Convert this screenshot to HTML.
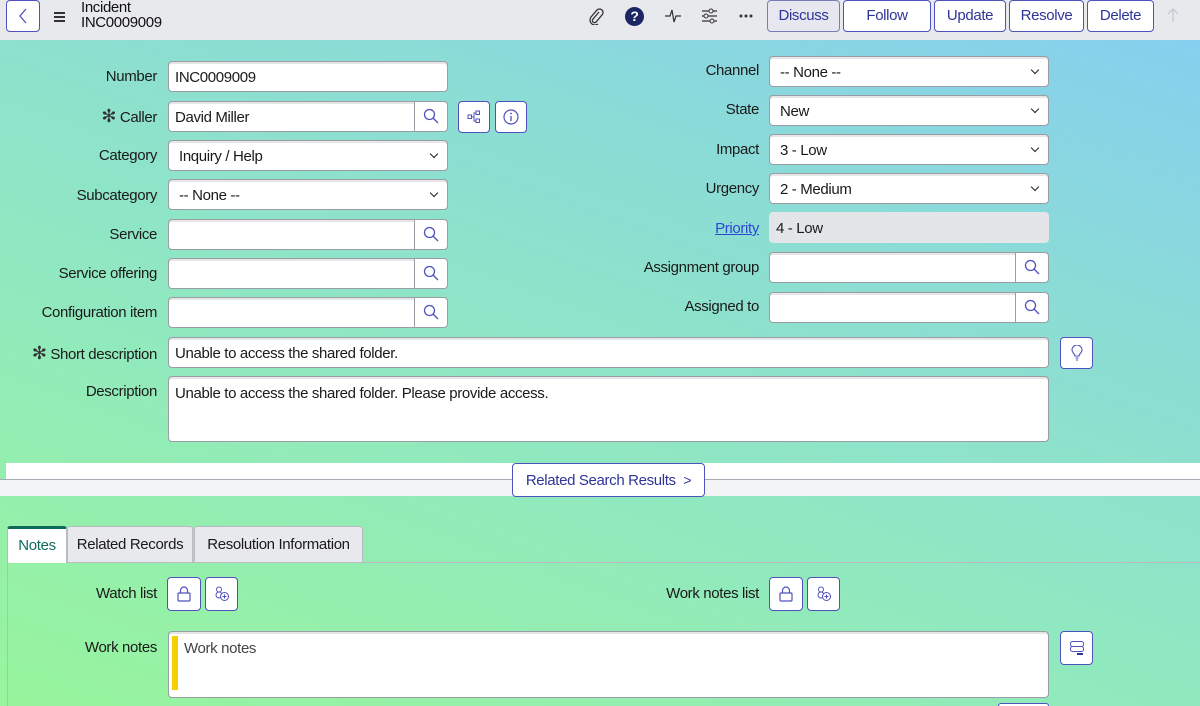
<!DOCTYPE html>
<html><head><meta charset="utf-8">
<style>
*{box-sizing:border-box;margin:0;padding:0}
html{width:1200px;height:706px;overflow:hidden;background:#95f0a4}
body{width:1200px;height:706px;overflow:hidden;position:relative;font-family:"Liberation Sans",sans-serif;font-size:15px;color:#1a1a1a;letter-spacing:-0.35px;
background:linear-gradient(200deg,#86cdf2 0%,#8bdcd6 30%,#90e8c0 60%,#98f59c 100%);}
.a{position:absolute}
.hdr{left:0;top:0;width:1200px;height:40px;background:#e8e9ec}
.lbl{position:absolute;text-align:right;white-space:nowrap;line-height:20px}
.inp{position:absolute;background:#fff;border:1px solid #9a9ca6;border-radius:4px;height:31px;line-height:29px;padding-top:1px;padding-left:6px;box-shadow:inset 0 2px 0 #e6e6e6;white-space:nowrap}
.sel::after{content:"";position:absolute;right:10px;top:10px;width:5px;height:5px;border-right:1.6px solid #222;border-bottom:1.6px solid #222;transform:rotate(45deg)}
.srch{position:absolute;right:0;top:0;width:33px;height:29px;border-left:1px solid #9a9ca6;background:#fff;border-radius:0 4px 4px 0}
.srch svg{position:absolute;left:8px;top:6px}
.ib{position:absolute;background:#fff;border:1.5px solid #4f52bd;border-radius:4px}
.ib svg{position:absolute;left:50%;top:50%;transform:translate(-50%,-50%)}
.btn{position:absolute;top:0;height:32px;border:1.5px solid #4f52bd;border-radius:4px;background:#fff;color:#2f3596;font-size:15px;text-align:center;line-height:30px}
.tab{position:absolute;top:526px;height:36px;background:#e8e9ec;border:1px solid #b8bac2;border-bottom:none;border-radius:3px 3px 0 0;line-height:35px;text-align:center}
</style></head><body>
<div class="a hdr"></div>
<div class="ib" style="left:6px;top:0;width:34px;height:32px"><svg width="10" height="16" viewBox="0 0 10 16"><path d="M8 1L2 8l6 7" fill="none" stroke="#4f52bd" stroke-width="1.3"/></svg></div>
<div class="a" style="left:54px;top:12px;width:11px"><div style="height:1.5px;background:#333;margin-bottom:2.5px"></div><div style="height:1.5px;background:#333;margin-bottom:2.5px"></div><div style="height:1.5px;background:#333"></div></div>
<div class="a" style="left:81px;top:0;line-height:15px;font-size:15px;color:#111">Incident<br>INC0009009</div>
<svg class="a" style="left:588px;top:7px" width="16" height="18" viewBox="0 0 16 18"><path d="M11 5L5 12a2 2 0 0 0 3 3l6-7a3.5 3.5 0 0 0-5-5L3 10a5 5 0 0 0 7 7" fill="none" stroke="#333" stroke-width="1.3"/></svg>
<div class="a" style="left:625px;top:7px;width:19px;height:19px;border-radius:50%;background:#1d2665;color:#fff;font-weight:bold;font-size:14px;text-align:center;line-height:19px">?</div>
<svg class="a" style="left:664px;top:8px" width="18" height="16" viewBox="0 0 18 16"><path d="M1 8h5l2-6 2 12 2-6h5" fill="none" stroke="#333" stroke-width="1.2"/></svg>
<svg class="a" style="left:701px;top:8px" width="17" height="16" viewBox="0 0 17 16"><path d="M1 3h15M1 8h15M1 13h15" stroke="#333" stroke-width="1.2"/><circle cx="10" cy="3" r="2" fill="#e8e9ec" stroke="#333"/><circle cx="5" cy="8" r="2" fill="#e8e9ec" stroke="#333"/><circle cx="11" cy="13" r="2" fill="#e8e9ec" stroke="#333"/></svg>
<svg class="a" style="left:739px;top:14px" width="14" height="4" viewBox="0 0 14 4"><circle cx="2" cy="2" r="1.5" fill="#333"/><circle cx="7" cy="2" r="1.5" fill="#333"/><circle cx="12" cy="2" r="1.5" fill="#333"/></svg>
<div class="btn" style="left:767px;width:73px;background:#e6e7f1;border-color:#7a7db5">Discuss</div>
<div class="btn" style="left:843px;width:88px">Follow</div>
<div class="btn" style="left:934px;width:72px">Update</div>
<div class="btn" style="left:1009px;width:75px">Resolve</div>
<div class="btn" style="left:1087px;width:67px">Delete</div>
<svg class="a" style="left:1167px;top:7px" width="12" height="16" viewBox="0 0 12 16"><path d="M6 15V2M1 7l5-5 5 5" fill="none" stroke="#c4c5cc" stroke-width="1.2"/></svg>

<!-- left column -->
<div class="lbl" style="right:1043px;top:67px">Number</div>
<div class="inp" style="left:168px;top:61px;width:280px">INC0009009</div>
<div class="lbl" style="right:1043px;top:106px"><span style="font-size:18px;color:#333">✻</span> Caller</div>
<div class="inp" style="left:168px;top:101px;width:280px">David Miller<div class="srch"><svg width="16" height="16" viewBox="0 0 16 16"><circle cx="6.5" cy="6.5" r="5" fill="none" stroke="#4f52bd" stroke-width="1.3"/><path d="M10 10l5 5" stroke="#4f52bd" stroke-width="1.3"/></svg></div></div>
<div class="ib" style="left:458px;top:101px;width:32px;height:32px"><svg width="14" height="14" viewBox="0 0 14 14"><rect x="1" y="5" width="3.5" height="3.5" fill="none" stroke="#4f52bd"/><rect x="9" y="1" width="3.5" height="3.5" fill="none" stroke="#4f52bd"/><rect x="9" y="9" width="3.5" height="3.5" fill="none" stroke="#4f52bd"/><path d="M4.5 7H7V3h2M7 7v4h2" fill="none" stroke="#4f52bd"/></svg></div>
<div class="ib" style="left:495px;top:101px;width:32px;height:32px"><svg width="16" height="16" viewBox="0 0 16 16"><circle cx="8" cy="8" r="7" fill="none" stroke="#4f52bd" stroke-width="1.2"/><path d="M8 7v5" stroke="#4f52bd" stroke-width="1.3"/><circle cx="8" cy="4.5" r="0.9" fill="#4f52bd"/></svg></div>
<div class="lbl" style="right:1043px;top:146px">Category</div>
<div class="inp sel" style="left:168px;top:140px;width:280px;padding-left:10px">Inquiry / Help</div>
<div class="lbl" style="right:1043px;top:186px">Subcategory</div>
<div class="inp sel" style="left:168px;top:179px;width:280px;padding-left:10px">-- None --</div>
<div class="lbl" style="right:1043px;top:225px">Service</div>
<div class="inp" style="left:168px;top:219px;width:280px"><div class="srch"><svg width="16" height="16" viewBox="0 0 16 16"><circle cx="6.5" cy="6.5" r="5" fill="none" stroke="#4f52bd" stroke-width="1.3"/><path d="M10 10l5 5" stroke="#4f52bd" stroke-width="1.3"/></svg></div></div>
<div class="lbl" style="right:1043px;top:264px">Service offering</div>
<div class="inp" style="left:168px;top:258px;width:280px"><div class="srch"><svg width="16" height="16" viewBox="0 0 16 16"><circle cx="6.5" cy="6.5" r="5" fill="none" stroke="#4f52bd" stroke-width="1.3"/><path d="M10 10l5 5" stroke="#4f52bd" stroke-width="1.3"/></svg></div></div>
<div class="lbl" style="right:1043px;top:303px">Configuration item</div>
<div class="inp" style="left:168px;top:297px;width:280px"><div class="srch"><svg width="16" height="16" viewBox="0 0 16 16"><circle cx="6.5" cy="6.5" r="5" fill="none" stroke="#4f52bd" stroke-width="1.3"/><path d="M10 10l5 5" stroke="#4f52bd" stroke-width="1.3"/></svg></div></div>
<div class="lbl" style="right:1043px;top:343px"><span style="font-size:18px;color:#333">✻</span> Short description</div>
<div class="inp" style="left:168px;top:337px;width:881px">Unable to access the shared folder.</div>
<div class="ib" style="left:1060px;top:337px;width:33px;height:32px"><svg width="12" height="16" viewBox="0 0 12 16"><path d="M4 11C4 9 1 7.5 1 5a5 5 0 0 1 10 0c0 2.5-3 4-3 6z" fill="none" stroke="#4f52bd" stroke-width="1.1"/><path d="M4.5 13h3M5 15h2" stroke="#4f52bd"/></svg></div>
<div class="lbl" style="right:1043px;top:382px">Description</div>
<div class="inp" style="left:168px;top:376px;width:881px;height:66px;line-height:32px">Unable to access the shared folder. Please provide access.</div>

<!-- right column -->
<div class="lbl" style="right:441px;top:61px">Channel</div>
<div class="inp sel" style="left:769px;top:56px;width:280px;padding-left:10px">-- None --</div>
<div class="lbl" style="right:441px;top:100px">State</div>
<div class="inp sel" style="left:769px;top:95px;width:280px;padding-left:10px">New</div>
<div class="lbl" style="right:441px;top:140px">Impact</div>
<div class="inp sel" style="left:769px;top:134px;width:280px;padding-left:10px">3 - Low</div>
<div class="lbl" style="right:441px;top:179px">Urgency</div>
<div class="inp sel" style="left:769px;top:173px;width:280px;padding-left:10px">2 - Medium</div>
<div class="lbl" style="right:441px;top:219px;color:#2f45d6;text-decoration:underline">Priority</div>
<div class="inp" style="left:769px;top:212px;width:280px;background:#e4e5e9;border-color:#e4e5e9;box-shadow:none">4 - Low</div>
<div class="lbl" style="right:441px;top:258px">Assignment group</div>
<div class="inp" style="left:769px;top:252px;width:280px"><div class="srch"><svg width="16" height="16" viewBox="0 0 16 16"><circle cx="6.5" cy="6.5" r="5" fill="none" stroke="#4f52bd" stroke-width="1.3"/><path d="M10 10l5 5" stroke="#4f52bd" stroke-width="1.3"/></svg></div></div>
<div class="lbl" style="right:441px;top:297px">Assigned to</div>
<div class="inp" style="left:769px;top:292px;width:280px"><div class="srch"><svg width="16" height="16" viewBox="0 0 16 16"><circle cx="6.5" cy="6.5" r="5" fill="none" stroke="#4f52bd" stroke-width="1.3"/><path d="M10 10l5 5" stroke="#4f52bd" stroke-width="1.3"/></svg></div></div>

<!-- separator -->
<div class="a" style="left:6px;top:463px;width:1194px;height:16px;background:#fff"></div>
<div class="a" style="left:0;top:479px;width:1200px;height:1px;background:#a8aab4"></div>
<div class="a" style="left:0;top:480px;width:1200px;height:16px;background:#f3f4f6"></div>
<div class="btn" style="left:512px;top:463px;width:193px;height:34px;line-height:32px;font-size:15px">Related Search Results &nbsp;<span style="font-size:14px">&gt;</span></div>

<!-- tabs -->
<div class="a" style="left:7px;top:562px;width:1193px;height:1px;background:#b8bac2"></div>
<div class="a" style="left:7px;top:562px;width:1px;height:144px;background:#b8bac2"></div>
<div class="tab" style="left:7px;width:60px;background:#fff;color:#0e6b5c;border-top:3px solid #0e6b5c;height:37px;line-height:33px">Notes</div>
<div class="tab" style="left:67px;width:126px">Related Records</div>
<div class="tab" style="left:194px;width:169px">Resolution Information</div>

<div class="lbl" style="right:1043px;top:584px">Watch list</div>
<div class="ib" style="left:167px;top:577px;width:34px;height:34px"><svg width="14" height="16" viewBox="0 0 14 16"><rect x="1" y="7" width="12" height="8" rx="1" fill="none" stroke="#4f52bd" stroke-width="1.2"/><path d="M3.5 7V4.5a3.5 3.5 0 0 1 7 0V7" fill="none" stroke="#4f52bd" stroke-width="1.2"/></svg></div>
<div class="ib" style="left:205px;top:577px;width:33px;height:34px"><svg width="16" height="16" viewBox="0 0 16 16"><circle cx="5" cy="3.5" r="2.5" fill="none" stroke="#4f52bd"/><circle cx="5" cy="9" r="3" fill="none" stroke="#4f52bd"/><circle cx="10.5" cy="10.5" r="4" fill="#fff" stroke="#4f52bd"/><path d="M10.5 8.5v4M8.5 10.5h4" stroke="#4f52bd"/></svg></div>
<div class="lbl" style="right:441px;top:584px">Work notes list</div>
<div class="ib" style="left:769px;top:577px;width:34px;height:34px"><svg width="14" height="16" viewBox="0 0 14 16"><rect x="1" y="7" width="12" height="8" rx="1" fill="none" stroke="#4f52bd" stroke-width="1.2"/><path d="M3.5 7V4.5a3.5 3.5 0 0 1 7 0V7" fill="none" stroke="#4f52bd" stroke-width="1.2"/></svg></div>
<div class="ib" style="left:807px;top:577px;width:33px;height:34px"><svg width="16" height="16" viewBox="0 0 16 16"><circle cx="5" cy="3.5" r="2.5" fill="none" stroke="#4f52bd"/><circle cx="5" cy="9" r="3" fill="none" stroke="#4f52bd"/><circle cx="10.5" cy="10.5" r="4" fill="#fff" stroke="#4f52bd"/><path d="M10.5 8.5v4M8.5 10.5h4" stroke="#4f52bd"/></svg></div>

<div class="lbl" style="right:1043px;top:638px">Work notes</div>
<div class="inp" style="left:168px;top:631px;width:881px;height:67px;padding-left:15px;line-height:32px;color:#444">Work notes</div>
<div class="a" style="left:172px;top:636px;width:6px;height:54px;background:#f5cf00"></div>
<div class="ib" style="left:1060px;top:631px;width:33px;height:34px"><svg width="16" height="16" viewBox="0 0 16 16"><rect x="1.5" y="1.5" width="13" height="5" rx="2" fill="none" stroke="#4f52bd"/><rect x="1.5" y="6.5" width="13" height="5" rx="2" fill="none" stroke="#4f52bd"/><path d="M8 14h6" stroke="#2f35a0" stroke-width="2"/></svg></div>
<div class="a" style="left:998px;top:703px;width:51px;height:3px;border:1.5px solid #4f52bd;border-bottom:none;border-radius:4px 4px 0 0;background:#fff"></div>
</body></html>
